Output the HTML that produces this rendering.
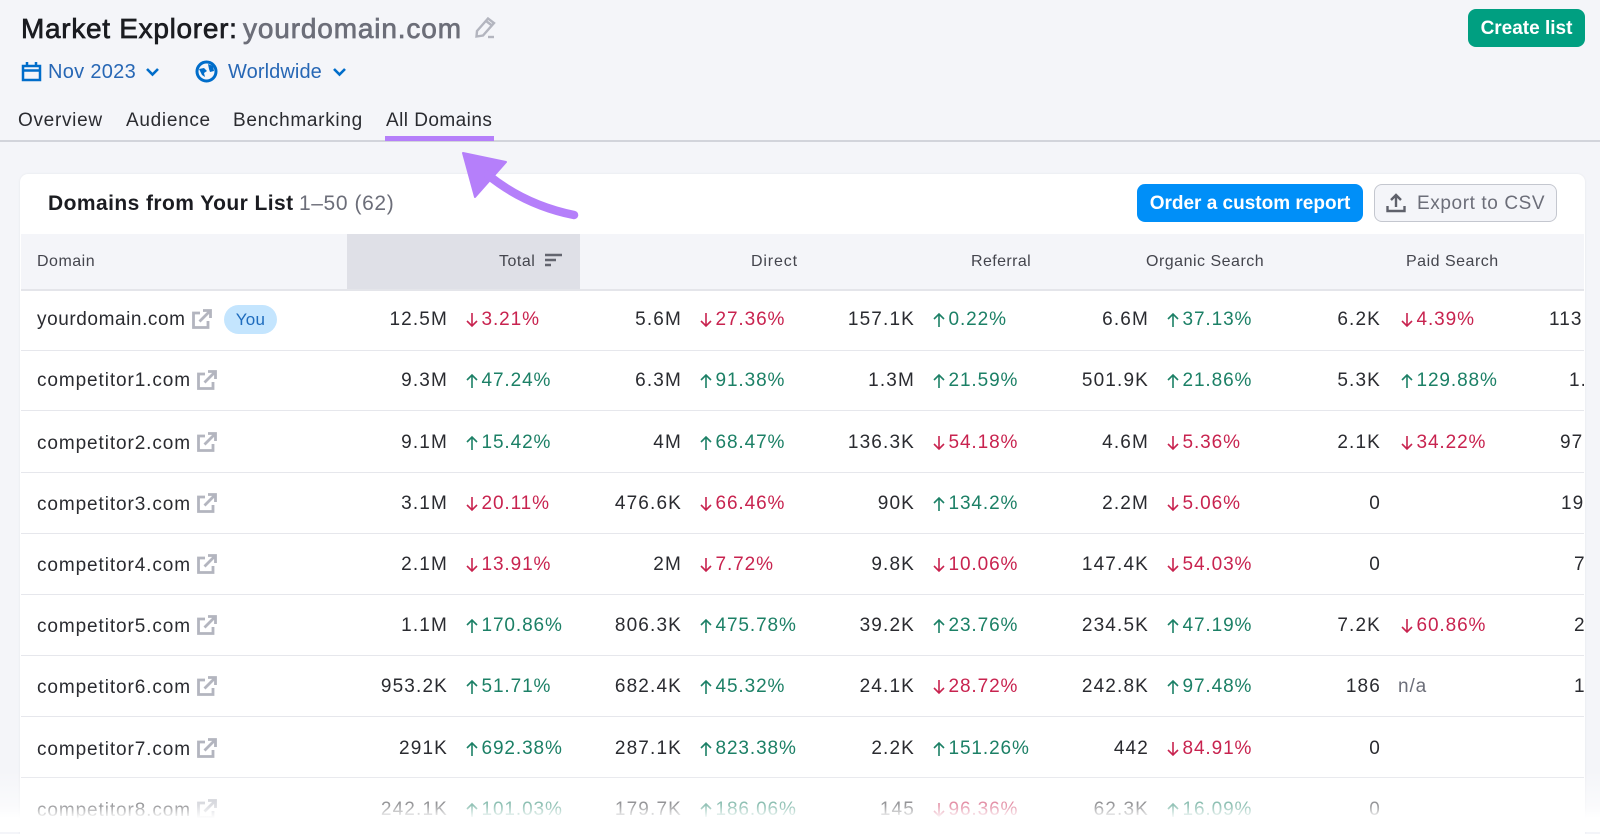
<!DOCTYPE html>
<html><head><meta charset="utf-8"><style>
*{box-sizing:border-box}
html,body{margin:0;padding:0;width:1600px;height:832px;overflow:hidden;background:#f4f5f9;font-family:"Liberation Sans",sans-serif;color:#222;}
.a{position:absolute;white-space:nowrap}
#clip{position:absolute;left:0;top:0;width:1584px;height:832px;overflow:hidden}
.n{position:absolute;width:110px;text-align:right;font-size:19px;letter-spacing:1.15px;line-height:22px;color:#2a2b30;white-space:nowrap}
.p{position:absolute;font-size:19px;letter-spacing:.9px;line-height:22px;white-space:nowrap;padding-left:16.500px}
.p svg{position:absolute;left:-.5px;top:3px;width:14px;height:16px}
.u{color:#1c8066}.d{color:#c8234f}
.c1{left:338px}.c2{left:572px}.c3{left:805px}.c4{left:1039px}.c5{left:1271px}
.q1{left:465px}.q2{left:699px}.q3{left:932px}.q4{left:1166px}.q5{left:1400px}
.dom{position:absolute;left:37px;font-size:19px;letter-spacing:.9px;line-height:22px;color:#2a2b30;white-space:nowrap}
.ext{position:absolute;width:20px;height:20px}
.sep{position:absolute;left:21px;width:1563px;height:1px;background:#e6e7ec}
.h{position:absolute;font-size:16px;letter-spacing:.5px;line-height:20px;color:#44454d;white-space:nowrap;top:252px}
.e{position:absolute;font-size:19px;letter-spacing:1.1px;line-height:22px;color:#2a2b30}
.t{font-size:28px;line-height:34px;-webkit-text-stroke:.7px currentColor}
.tab{top:110px;font-size:19px;line-height:22px;color:#2a2b30;letter-spacing:.7px}
</style></head><body>
<svg width="0" height="0" style="position:absolute"><defs>
<symbol id="up" viewBox="0 0 14 16"><path d="M7 15V2M2 7l5-5 5 5" fill="none" stroke="currentColor" stroke-width="1.6"/></symbol>
<symbol id="dn" viewBox="0 0 14 16"><path d="M7 1v13M2 9l5 5 5-5" fill="none" stroke="currentColor" stroke-width="1.6"/></symbol>
<symbol id="ex" viewBox="0 0 20 20"><path d="M8 4H1.500v14.500H16V12" fill="none" stroke="#b3b5bf" stroke-width="2.800"/><path d="M7.500 12.500 18 2M11 1.500h7.500V9" fill="none" stroke="#b3b5bf" stroke-width="2.800"/></symbol>
</defs></svg>

<div class="a t" style="left:21px;top:12px;color:#1b1c21;letter-spacing:.7px">Market Explorer:</div>
<div class="a t" style="left:243px;top:12px;color:#6c6e79;letter-spacing:.85px">yourdomain.com</div>
<svg class="a" style="left:474px;top:16px" width="22" height="23" viewBox="0 0 22 23"><path d="M3 15 14 2.500l6 4.500L9 19.500l-6.500 1zM12 5l6 4.500" fill="none" stroke="#b3b5bf" stroke-width="2.400"/><path d="M14 21h6" stroke="#b3b5bf" stroke-width="2.400"/></svg>

<svg class="a" style="left:21px;top:60px" width="21" height="22" viewBox="0 0 21 22"><path d="M2 6h17v14H2zM2 10.500h17M6 2v5M15 2v5" fill="none" stroke="#006dca" stroke-width="2.500"/></svg>
<div class="a" style="left:48px;top:60px;font-size:20px;line-height:25px;color:#2767b5;letter-spacing:.3px">Nov 2023</div>
<svg class="a" style="left:145px;top:67px" width="15" height="10" viewBox="0 0 15 10"><path d="M2 2l5.500 5.500L13 2" fill="none" stroke="#006dca" stroke-width="2.600"/></svg>
<svg class="a" style="left:195px;top:60px" width="23" height="23" viewBox="0 0 23 23"><circle cx="11.500" cy="11.500" r="9.500" fill="none" stroke="#006dca" stroke-width="3"/><path d="M4 9l5-1 3 3-3 2 1 4-3-2zM13 4l5 2 1 5-4 1-1-3z" fill="#006dca"/></svg>
<div class="a" style="left:228px;top:60px;font-size:20px;line-height:25px;color:#2767b5;letter-spacing:.1px">Worldwide</div>
<svg class="a" style="left:332px;top:67px" width="15" height="10" viewBox="0 0 15 10"><path d="M2 2l5.500 5.500L13 2" fill="none" stroke="#006dca" stroke-width="2.600"/></svg>

<div class="a tab" style="left:18px">Overview</div>
<div class="a tab" style="left:126px">Audience</div>
<div class="a tab" style="left:233px">Benchmarking</div>
<div class="a tab" style="left:386px;letter-spacing:.45px">All Domains</div>
<div class="a" style="left:0;top:140px;width:1600px;height:1.5px;background:#d2d4db"></div>
<div class="a" style="left:385px;top:136px;width:109px;height:5px;background:#b57ffa"></div>

<div class="a" style="left:1468px;top:9px;width:117px;height:38px;background:#009f81;border-radius:8px;color:#fff;font-weight:bold;font-size:19px;line-height:40px;text-align:center">Create list</div>

<div class="a" style="left:20px;top:174px;width:1565px;height:660px;background:#fff;border-radius:8px 8px 0 0;box-shadow:0 0 2px #e4e5ea"></div>
<div class="a" style="left:48px;top:191px;font-size:21px;line-height:26px;font-weight:bold;color:#1b1c21;letter-spacing:.43px">Domains from Your List</div>
<div class="a" style="left:299px;top:191px;font-size:21px;line-height:26px;color:#6c6e79;letter-spacing:.6px">1–50 (62)</div>
<div class="a" style="left:1137px;top:184px;width:226px;height:38px;background:#008ff8;border-radius:8px;color:#fff;font-weight:bold;font-size:19px;line-height:40px;text-align:center">Order a custom report</div>
<div class="a" style="left:1374px;top:184px;width:183px;height:38px;background:#f4f5f9;border:1.5px solid #c4c7cf;border-radius:8px;color:#6c6e79;font-size:19px;line-height:37px;padding-left:42px;letter-spacing:.6px">Export to CSV</div>
<svg class="a" style="left:1386px;top:193px" width="20" height="20" viewBox="0 0 20 20"><path d="M10 14V2.500M5 7l5-5 5 5" fill="none" stroke="#5f616b" stroke-width="2.400"/><path d="M1.500 13v5h17v-5" fill="none" stroke="#5f616b" stroke-width="2.400"/></svg>

<div class="a" style="left:21px;top:234px;width:1563px;height:55px;background:#f4f5f9"></div>
<div class="a" style="left:347px;top:234px;width:233px;height:55px;background:#dfe0e7"></div>
<div class="a" style="left:21px;top:289px;width:1563px;height:1.5px;background:#e4e5ea"></div>
<div class="h" style="left:37px">Domain</div>
<div class="h" style="left:499px">Total</div>
<svg class="a" style="left:545px;top:253px" width="17" height="15" viewBox="0 0 17 15"><path d="M0 2h17M0 7h11M0 12h6" stroke="#63656f" stroke-width="2.400"/></svg>
<div class="h" style="left:751px;letter-spacing:.85px">Direct</div>
<div class="h" style="left:971px;letter-spacing:.4px">Referral</div>
<div class="h" style="left:1146px">Organic Search</div>
<div class="h" style="left:1406px">Paid Search</div>

<div class="sep" style="top:350px"></div><div class="sep" style="top:410px"></div><div class="sep" style="top:472px"></div><div class="sep" style="top:533px"></div><div class="sep" style="top:594px"></div><div class="sep" style="top:655px"></div><div class="sep" style="top:716px"></div><div class="sep" style="top:777px"></div>

<div id="clip">
<!-- row 1 -->
<div style="position:absolute;left:0;top:309px;width:1600px">
<div class="dom" style="letter-spacing:.58px">yourdomain.com</div><svg class="ext" style="left:192px;top:0"><use href="#ex"/></svg>
<div class="a" style="left:224px;top:-4px;width:53px;height:29px;border-radius:15px;background:#c4e5fe;color:#1d6bbd;font-size:17px;line-height:30px;text-align:center;letter-spacing:.3px">You</div>
<div class="n c1">12.5M</div><div class="p q1 d"><svg><use href="#dn"/></svg>3.21%</div>
<div class="n c2">5.6M</div><div class="p q2 d"><svg><use href="#dn"/></svg>27.36%</div>
<div class="n c3">157.1K</div><div class="p q3 u"><svg><use href="#up"/></svg>0.22%</div>
<div class="n c4">6.6M</div><div class="p q4 u"><svg><use href="#up"/></svg>37.13%</div>
<div class="n c5">6.2K</div><div class="p q5 d"><svg><use href="#dn"/></svg>4.39%</div>
<div class="e" style="left:1549px">113</div>
</div>
<!-- row 2 -->
<div style="position:absolute;left:0;top:370px;width:1600px">
<div class="dom">competitor1.com</div><svg class="ext" style="left:197px;top:0"><use href="#ex"/></svg>
<div class="n c1">9.3M</div><div class="p q1 u"><svg><use href="#up"/></svg>47.24%</div>
<div class="n c2">6.3M</div><div class="p q2 u"><svg><use href="#up"/></svg>91.38%</div>
<div class="n c3">1.3M</div><div class="p q3 u"><svg><use href="#up"/></svg>21.59%</div>
<div class="n c4">501.9K</div><div class="p q4 u"><svg><use href="#up"/></svg>21.86%</div>
<div class="n c5">5.3K</div><div class="p q5 u"><svg><use href="#up"/></svg>129.88%</div>
<div class="e" style="left:1569px">1.</div>
</div>
<!-- row 3 -->
<div style="position:absolute;left:0;top:432px;width:1600px">
<div class="dom" style="top:1px">competitor2.com</div><svg class="ext" style="left:197px;top:0"><use href="#ex"/></svg>
<div class="n c1">9.1M</div><div class="p q1 u"><svg><use href="#up"/></svg>15.42%</div>
<div class="n c2">4M</div><div class="p q2 u"><svg><use href="#up"/></svg>68.47%</div>
<div class="n c3">136.3K</div><div class="p q3 d"><svg><use href="#dn"/></svg>54.18%</div>
<div class="n c4">4.6M</div><div class="p q4 d"><svg><use href="#dn"/></svg>5.36%</div>
<div class="n c5">2.1K</div><div class="p q5 d"><svg><use href="#dn"/></svg>34.22%</div>
<div class="e" style="left:1560px">97</div>
</div>
<!-- row 4 -->
<div style="position:absolute;left:0;top:493px;width:1600px">
<div class="dom" style="top:1px">competitor3.com</div><svg class="ext" style="left:197px;top:0"><use href="#ex"/></svg>
<div class="n c1">3.1M</div><div class="p q1 d"><svg><use href="#dn"/></svg>20.11%</div>
<div class="n c2">476.6K</div><div class="p q2 d"><svg><use href="#dn"/></svg>66.46%</div>
<div class="n c3">90K</div><div class="p q3 u"><svg><use href="#up"/></svg>134.2%</div>
<div class="n c4">2.2M</div><div class="p q4 d"><svg><use href="#dn"/></svg>5.06%</div>
<div class="n c5">0</div>
<div class="e" style="left:1561px">19</div>
</div>
<!-- row 5 -->
<div style="position:absolute;left:0;top:554px;width:1600px">
<div class="dom" style="top:1px">competitor4.com</div><svg class="ext" style="left:197px;top:0"><use href="#ex"/></svg>
<div class="n c1">2.1M</div><div class="p q1 d"><svg><use href="#dn"/></svg>13.91%</div>
<div class="n c2">2M</div><div class="p q2 d"><svg><use href="#dn"/></svg>7.72%</div>
<div class="n c3">9.8K</div><div class="p q3 d"><svg><use href="#dn"/></svg>10.06%</div>
<div class="n c4">147.4K</div><div class="p q4 d"><svg><use href="#dn"/></svg>54.03%</div>
<div class="n c5">0</div>
<div class="e" style="left:1574px">7</div>
</div>
<!-- row 6 -->
<div style="position:absolute;left:0;top:615px;width:1600px">
<div class="dom" style="top:1px">competitor5.com</div><svg class="ext" style="left:197px;top:0"><use href="#ex"/></svg>
<div class="n c1">1.1M</div><div class="p q1 u"><svg><use href="#up"/></svg>170.86%</div>
<div class="n c2">806.3K</div><div class="p q2 u"><svg><use href="#up"/></svg>475.78%</div>
<div class="n c3">39.2K</div><div class="p q3 u"><svg><use href="#up"/></svg>23.76%</div>
<div class="n c4">234.5K</div><div class="p q4 u"><svg><use href="#up"/></svg>47.19%</div>
<div class="n c5">7.2K</div><div class="p q5 d"><svg><use href="#dn"/></svg>60.86%</div>
<div class="e" style="left:1574px">2</div>
</div>
<!-- row 7 -->
<div style="position:absolute;left:0;top:676px;width:1600px">
<div class="dom" style="top:1px">competitor6.com</div><svg class="ext" style="left:197px;top:0"><use href="#ex"/></svg>
<div class="n c1">953.2K</div><div class="p q1 u"><svg><use href="#up"/></svg>51.71%</div>
<div class="n c2">682.4K</div><div class="p q2 u"><svg><use href="#up"/></svg>45.32%</div>
<div class="n c3">24.1K</div><div class="p q3 d"><svg><use href="#dn"/></svg>28.72%</div>
<div class="n c4">242.8K</div><div class="p q4 u"><svg><use href="#up"/></svg>97.48%</div>
<div class="n c5">186</div><div class="a" style="left:1398px;font-size:19px;line-height:22px;color:#6c6e79;letter-spacing:.9px">n/a</div>
<div class="e" style="left:1574px">1</div>
</div>
<!-- row 8 -->
<div style="position:absolute;left:0;top:738px;width:1600px">
<div class="dom" style="top:1px">competitor7.com</div><svg class="ext" style="left:197px;top:0"><use href="#ex"/></svg>
<div class="n c1">291K</div><div class="p q1 u"><svg><use href="#up"/></svg>692.38%</div>
<div class="n c2">287.1K</div><div class="p q2 u"><svg><use href="#up"/></svg>823.38%</div>
<div class="n c3">2.2K</div><div class="p q3 u"><svg><use href="#up"/></svg>151.26%</div>
<div class="n c4">442</div><div class="p q4 d"><svg><use href="#dn"/></svg>84.91%</div>
<div class="n c5">0</div>
</div>
<!-- row 9 -->
<div style="position:absolute;left:0;top:799px;width:1600px">
<div class="dom" style="top:1px">competitor8.com</div><svg class="ext" style="left:197px;top:0"><use href="#ex"/></svg>
<div class="n c1">242.1K</div><div class="p q1 u"><svg><use href="#up"/></svg>101.03%</div>
<div class="n c2">179.7K</div><div class="p q2 u"><svg><use href="#up"/></svg>186.06%</div>
<div class="n c3">145</div><div class="p q3 d"><svg><use href="#dn"/></svg>96.36%</div>
<div class="n c4">62.3K</div><div class="p q4 u"><svg><use href="#up"/></svg>16.09%</div>
<div class="n c5">0</div>
</div>
</div>

<div class="a" style="left:0;top:770px;width:1600px;height:62px;background:linear-gradient(to bottom,rgba(255,255,255,0) 0,rgba(255,255,255,.55) 58%,#fff 78%,#fff 100%)"></div>

<svg class="a" style="left:455px;top:145px" width="130" height="80" viewBox="455 145 130 80">
<path d="M463 153 506 162 475 197z" fill="#b57ffa" stroke="#b57ffa" stroke-width="2" stroke-linejoin="round"/>
<path d="M488 175Q525 205 574 215" fill="none" stroke="#b57ffa" stroke-width="8.500" stroke-linecap="round"/>
</svg>
</body></html>
